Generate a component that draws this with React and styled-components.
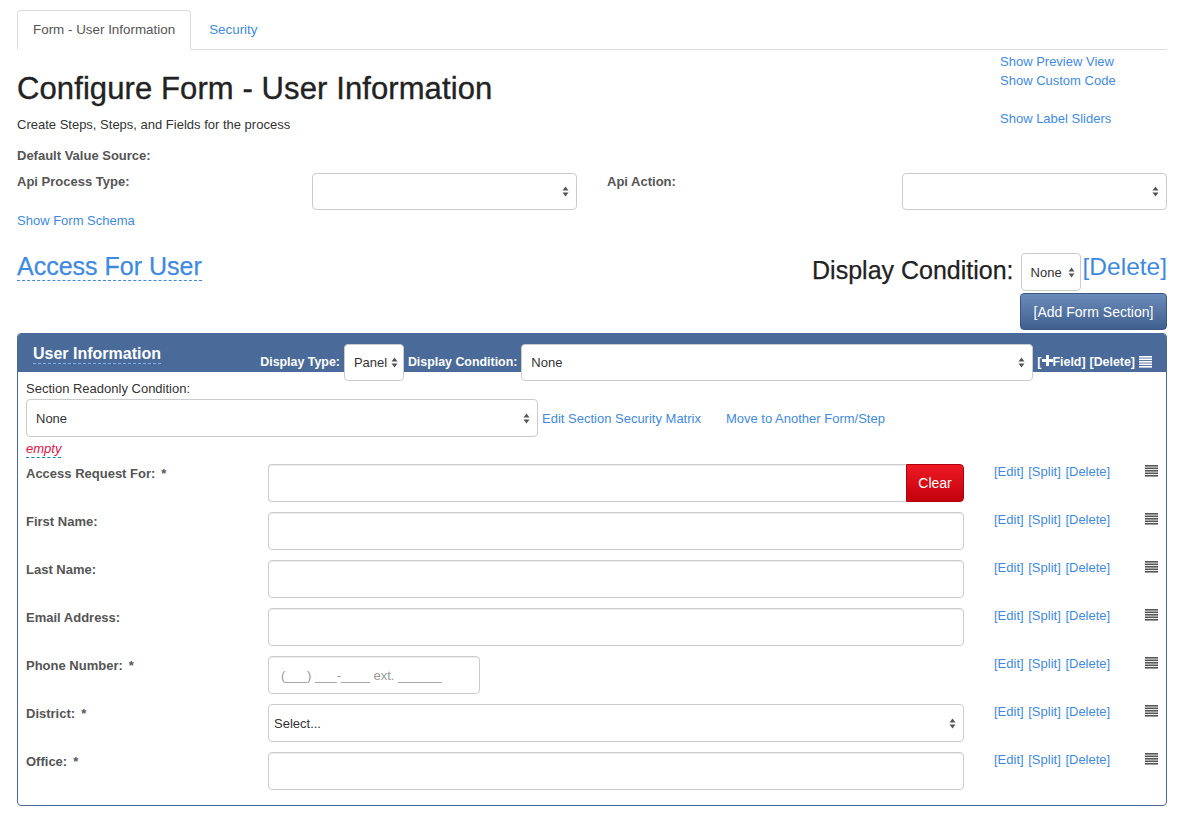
import React from "react";
import styled, { createGlobalStyle } from "styled-components";

const LINK = "#3f8ae0";
const PANEL = "#4a6b9a";

const GlobalStyle = createGlobalStyle`
  body {
    margin: 0;
    background: #fff;
    font-family: "Liberation Sans", Helvetica, Arial, sans-serif;
    font-size: 13px;
    color: #333;
  }
`;

const Page = styled.div`
  padding: 10px 15px 14px 17px;
`;

const TabBar = styled.div`
  display: flex;
  border-bottom: 1px solid #ddd;
`;

const Tab = styled.div`
  padding: 10px 15px;
  line-height: 18px;
  font-size: 13.4px;
  margin-right: 2px;
  margin-bottom: -1px;
  border: 1px solid ${(p) => (p.$active ? "#ddd" : "transparent")};
  border-bottom-color: ${(p) => (p.$active ? "#fff" : "transparent")};
  border-radius: 4px 4px 0 0;
  background: ${(p) => (p.$active ? "#fff" : "transparent")};
  color: ${(p) => (p.$active ? "#555" : LINK)};
`;

const TitleRow = styled.div`
  display: flex;
`;

const TitleCol = styled.div`
  flex: 1;
`;

const SideLinks = styled.div`
  width: 167px;
  padding-top: 2px;
  display: flex;
  flex-direction: column;
  align-items: flex-start;
`;

const Link = styled.a`
  color: ${LINK};
  text-decoration: none;
  font-size: ${(p) => p.$size || 13}px;
  line-height: ${(p) => p.$lh || 19}px;
  margin-top: ${(p) => p.$mt || 0}px;
  margin-left: ${(p) => p.$ml || 0}px;
  cursor: pointer;
  white-space: nowrap;
`;

const Title = styled.h1`
  margin: 22px 0 11px;
  font-size: 31px;
  line-height: 33px;
  font-weight: 500;
  letter-spacing: 0.1px;
  -webkit-text-stroke: 0.35px #222;
  color: #222;
`;

const Subtitle = styled.div`
  font-size: 13px;
  line-height: 18px;
`;

const BoldLabel = styled.div`
  font-weight: bold;
  color: #555;
  line-height: 18px;
  margin-top: ${(p) => p.$mt || 0}px;
  padding-left: ${(p) => p.$pl || 0}px;
`;

const SourceGrid = styled.div`
  display: grid;
  grid-template-columns: 295px 265px 1fr 265px;
  margin-top: 8px;
  align-items: start;
`;

const SelectBox = styled.div`
  box-sizing: border-box;
  display: flex;
  align-items: center;
  justify-content: space-between;
  flex: none;
  width: ${(p) => (p.$w ? `${p.$w}px` : "100%")};
  height: ${(p) => p.$h || 38}px;
  padding: 0 ${(p) => p.$pr || 7}px 0 ${(p) => p.$pl || 9}px;
  border: 1px solid #ccc;
  border-radius: 4px;
  background: #fff;
  font-size: 13px;
  color: #333;
`;

const Arrows = () => (
  <svg width="7" height="11" viewBox="0 0 7 11">
    <path d="M0.5 4.5 L3.5 0.5 L6.5 4.5 Z" fill="#555" />
    <path d="M0.5 6.5 L3.5 10.5 L6.5 6.5 Z" fill="#555" />
  </svg>
);

const Select = ({ value, ...rest }) => (
  <SelectBox {...rest}>
    <span>{value}</span>
    <Arrows />
  </SelectBox>
);

const SchemaLink = styled(Link)`
  display: block;
  margin-top: 2px;
  line-height: 18px;
`;

const AccessRow = styled.div`
  display: flex;
  align-items: flex-start;
  justify-content: space-between;
  margin-top: 23px;
`;

const AccessTitle = styled.a`
  font-size: 25px;
  line-height: 27px;
  color: ${LINK};
  -webkit-text-stroke: 0.25px ${LINK};
  border-bottom: 1px dashed ${LINK};
  cursor: pointer;
`;

const ConditionGroup = styled.div`
  display: flex;
  align-items: flex-start;
`;

const ConditionLabel = styled.span`
  font-size: 25px;
  line-height: 28px;
  margin-top: 3px;
  margin-right: 7px;
  color: #222;
  -webkit-text-stroke: 0.25px #222;
`;

const AddRow = styled.div`
  display: flex;
  justify-content: flex-end;
  margin-top: 2px;
`;

const AddButton = styled.button`
  box-sizing: border-box;
  width: 147px;
  height: 37px;
  border: 1px solid #3a5783;
  border-radius: 4px;
  background: linear-gradient(#6b8cba, #3f5f8e);
  color: #fff;
  font-family: inherit;
  font-size: 14px;
  padding: 0;
`;

const Panel = styled.div`
  margin-top: 3px;
  border: 1px solid ${PANEL};
  border-radius: 4px;
`;

const PanelHeading = styled.div`
  display: flex;
  align-items: flex-start;
  height: 38px;
  padding: 0 14px 0 15px;
  background: ${PANEL};
  border-radius: 3px 3px 0 0;
  color: #fff;
`;

const PanelTitle = styled.span`
  margin-top: 10px;
  font-size: 16px;
  line-height: 19px;
  font-weight: bold;
  border-bottom: 1px dashed #7fb0e8;
`;

const HeadingTools = styled.div`
  margin-left: auto;
  padding-top: 10px;
  display: flex;
  align-items: flex-start;
  gap: 4px;
`;

const HeadLabel = styled.span`
  margin-top: 9px;
  font-size: 12.4px;
  line-height: 18px;
  font-weight: bold;
  white-space: nowrap;
`;

const HeadActions = styled.span`
  display: flex;
  align-items: center;
  gap: 4px;
  margin-top: 9px;
  font-size: 12.4px;
  line-height: 18px;
  font-weight: bold;
  white-space: nowrap;
`;

const PanelBody = styled.div`
  padding: 8px 8px 5px 8px;
`;

const PlainLabel = styled.div`
  line-height: 18px;
`;

const ReadonlyRow = styled.div`
  display: flex;
  align-items: center;
  margin-top: 1px;
`;

const Editable = styled.span`
  display: inline-block;
  margin-top: 3px;
  line-height: 17px;
  color: #dd1144;
  font-style: italic;
  border-bottom: 1px dashed #08c;
`;

const FieldList = styled.div`
  margin-top: 6px;
`;

const FieldRow = styled.div`
  display: grid;
  grid-template-columns: 242px 696px 1fr 13px;
  align-items: start;
  margin-bottom: 10px;
`;

const FieldLabel = styled.div`
  font-weight: bold;
  color: #555;
  line-height: 18px;
  padding-top: 1px;
`;

const Required = styled.span`
  margin-left: 6px;
`;

const Input = styled.div`
  box-sizing: border-box;
  display: flex;
  align-items: center;
  flex: 1;
  width: ${(p) => (p.$w ? `${p.$w}px` : "auto")};
  height: 38px;
  padding: 0 12px;
  border: 1px solid #ccc;
  border-radius: ${(p) => (p.$joined ? "4px 0 0 4px" : "4px")};
  border-right-width: ${(p) => (p.$joined ? 0 : 1)}px;
  box-shadow: inset 0 1px 1px rgba(0, 0, 0, 0.075);
  color: #999;
  font-size: 13px;
  white-space: nowrap;
`;

const InputGroup = styled.div`
  display: flex;
`;

const ClearButton = styled.button`
  width: 58px;
  height: 38px;
  border: 1px solid #b00010;
  border-radius: 0 4px 4px 0;
  background: linear-gradient(#ee1a24, #c2000b);
  color: #fff;
  font-family: inherit;
  font-size: 14px;
  padding: 0;
`;

const Actions = styled.div`
  padding-left: 30px;
  margin-top: -2px;
  line-height: 18px;
  white-space: nowrap;
  & > a {
    margin-right: 1px;
  }
`;

const Grip = ({ color = "#555" }) => (
  <svg width="13" height="12" viewBox="0 0 13 12">
    {[0, 2.5, 5, 7.5, 10].map((y) => (
      <rect key={y} x="0" y={y} width="13" height="1.6" fill={color} />
    ))}
  </svg>
);

const Plus = () => (
  <svg width="11" height="11" viewBox="0 0 11 11">
    <rect x="4" y="0" width="3" height="11" fill="#fff" />
    <rect x="0" y="4" width="11" height="3" fill="#fff" />
  </svg>
);

const GripCell = styled.div`
  padding-top: 1px;
`;

const fields = [
  { label: "Access Request For:", required: true, kind: "clear" },
  { label: "First Name:" },
  { label: "Last Name:" },
  { label: "Email Address:" },
  { label: "Phone Number:", required: true, kind: "phone" },
  { label: "District:", required: true, kind: "select" },
  { label: "Office:", required: true },
];

const FieldControl = ({ kind }) => {
  if (kind === "clear") {
    return (
      <InputGroup>
        <Input $joined />
        <ClearButton>Clear</ClearButton>
      </InputGroup>
    );
  }
  if (kind === "phone") {
    return <Input $w={212}>(___) ___-____ ext. ______</Input>;
  }
  if (kind === "select") {
    return <Select value="Select..." $pl={5} />;
  }
  return <Input />;
};

export default function App() {
  return (
    <Page>
      <GlobalStyle />
      <TabBar>
        <Tab $active>Form - User Information</Tab>
        <Tab>Security</Tab>
      </TabBar>

      <TitleRow>
        <TitleCol>
          <Title>Configure Form - User Information</Title>
          <Subtitle>Create Steps, Steps, and Fields for the process</Subtitle>
        </TitleCol>
        <SideLinks>
          <Link>Show Preview View</Link>
          <Link>Show Custom Code</Link>
          <Link $mt={19}>Show Label Sliders</Link>
        </SideLinks>
      </TitleRow>

      <BoldLabel $mt={13}>Default Value Source:</BoldLabel>
      <SourceGrid>
        <BoldLabel>Api Process Type:</BoldLabel>
        <Select value="" $h={37} />
        <BoldLabel $pl={30}>Api Action:</BoldLabel>
        <Select value="" $h={37} />
      </SourceGrid>
      <SchemaLink>Show Form Schema</SchemaLink>

      <AccessRow>
        <AccessTitle>Access For User</AccessTitle>
        <ConditionGroup>
          <ConditionLabel>Display Condition:</ConditionLabel>
          <Select value="None" $w={60} $pr={5} />
          <Link $size={24.5} $lh={28} $ml={2}>[Delete]</Link>
        </ConditionGroup>
      </AccessRow>
      <AddRow>
        <AddButton>[Add Form Section]</AddButton>
      </AddRow>

      <Panel>
        <PanelHeading>
          <PanelTitle>User Information</PanelTitle>
          <HeadingTools>
            <HeadLabel>Display Type:</HeadLabel>
            <Select value="Panel" $w={60} $h={37} $pr={5} />
            <HeadLabel>Display Condition:</HeadLabel>
            <Select value="None" $w={512} $h={37} />
            <HeadActions>
              <span>
                [<Plus />Field]
              </span>
              <span>[Delete]</span>
              <Grip color="#fff" />
            </HeadActions>
          </HeadingTools>
        </PanelHeading>

        <PanelBody>
          <PlainLabel>Section Readonly Condition:</PlainLabel>
          <ReadonlyRow>
            <Select value="None" $w={512} />
            <Link $ml={4}>Edit Section Security Matrix</Link>
            <Link $ml={25}>Move to Another Form/Step</Link>
          </ReadonlyRow>
          <Editable>empty</Editable>

          <FieldList>
            {fields.map((f) => (
              <FieldRow key={f.label}>
                <FieldLabel>
                  {f.label}
                  {f.required && <Required>*</Required>}
                </FieldLabel>
                <div>
                  <FieldControl kind={f.kind} />
                </div>
                <Actions>
                  <Link>[Edit]</Link> <Link>[Split]</Link> <Link>[Delete]</Link>
                </Actions>
                <GripCell>
                  <Grip />
                </GripCell>
              </FieldRow>
            ))}
          </FieldList>
        </PanelBody>
      </Panel>
    </Page>
  );
}
